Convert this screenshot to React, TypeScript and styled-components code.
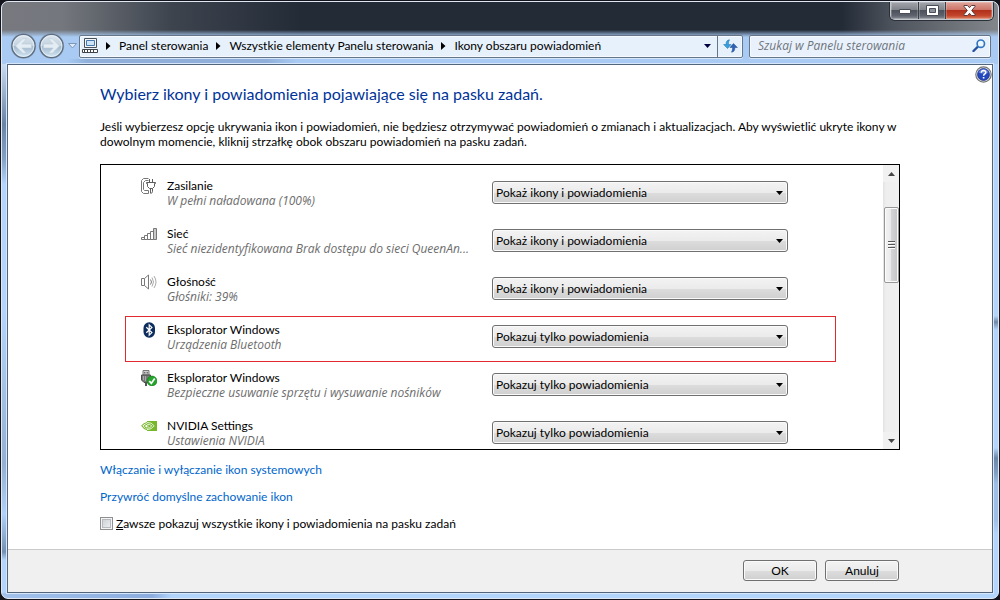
import React, { useState } from "react";
import styled, { createGlobalStyle } from "styled-components";

const uiFont = `Lato, "Open Sans", sans-serif`;
const italicFont = `"Open Sans", "Noto Sans", sans-serif`;

const GlobalStyle = createGlobalStyle`
  *, *::before, *::after { box-sizing: border-box; }
  body {
    margin: 0;
    background: #14151c;
    color: #000;
    font: 12px/15px ${uiFont};
  }
  button, input, select { font: inherit; color: inherit; margin: 0; }
  svg { display: block; flex: none; }
`;

const Desktop = styled.div`
  display: flex;
  min-height: 100vh;
  padding: 1px;
`;

const Window = styled.div`
  flex: 1;
  min-width: 0;
  display: flex;
  flex-direction: column;
  padding: 0 5px 5px;
  border: 1px solid #dfe8f2;
  border-radius: 7px;
  overflow: hidden;
  background:
    linear-gradient(#0000 28px, #a9cbf3 35px) 0 0 / 100% 62px no-repeat,
    linear-gradient(90deg, #77797f 0, #74777d 60px, #3d444e 170px, #232b37 300px, #232b37 840px, #4d535c 890px, #83878c 100%) 0 0 / 100% 62px no-repeat,
    linear-gradient(#0000 252px, #7088a6 258px, #0000 266px, #0000 384px, #6b86a8 394px, #7f9dc3 408px, #9ebfe5 420px, #9ebfe5 455px, #0000 470px) 100% 62px / 5px 100% no-repeat,
    linear-gradient(#c9dcf2 0, #6a84a5 60px, #84a2c6 95px, #0000 120px, #0000 250px, #94b0d2 400px, #b0d2f8 450px, #7390b3 488px, #0000 496px) 0 62px / 5px 100% no-repeat,
    linear-gradient(90deg, #a2c2ec 0, #8cacdf 150px, #b3d5fb 170px) 0 100% / 100% 5px no-repeat,
    #b3d5fb;
`;

const CaptionBar = styled.div`
  display: flex;
  justify-content: flex-end;
  align-items: flex-start;
  height: 32px;
`;

const CaptionGroup = styled.div`
  display: flex;
  border: 1px solid #c4c8cd;
  border-top: 0;
  border-radius: 0 0 5px 5px;
  overflow: hidden;
  box-shadow: 0 0 0 1px #2b2f38;
`;

const CaptionButton = styled.button<{ $close?: boolean }>`
  display: grid;
  place-items: center;
  width: ${(p) => (p.$close ? 47 : 27)}px;
  height: 17px;
  padding: 0;
  border: 0;
  background: ${(p) =>
    p.$close
      ? "linear-gradient(#e0a69c 0, #cd7467 45%, #b0301b 50%, #c3452b 80%, #dc8466 100%)"
      : "linear-gradient(#a3a6ab 0, #80848b 45%, #4c515b 50%, #5d626c 80%, #888d96 100%)"};
  box-shadow: inset 0 0 0 1px rgba(255, 255, 255, 0.22);
  & + & { border-left: 1px solid #3a3e47; }
`;

const NavBar = styled.div`
  display: flex;
  align-items: center;
  height: 30px;
  padding: 0 2px 6px 3px;
  background: linear-gradient(90deg, #0000 60px, rgba(105, 135, 180, 0.4) 80px, rgba(105, 135, 180, 0.4) 260px, #0000 290px) 0 25px / 100% 4px no-repeat;
`;

const TravelButtons = styled.div`
  display: flex;
  align-items: center;
  gap: 1px;
  width: 69px;
`;

const TravelButton = styled.button`
  padding: 0;
  border: 0;
  background: none;
`;

const AddressBar = styled.div`
  flex: 1;
  display: flex;
  min-width: 0;
  height: 23px;
  border: 1px solid #66768a;
  border-radius: 2px;
  background: #e7f1fb;
  box-shadow: inset 0 0 0 1px #f6faff, 0 1px 0 #d5e6fa;
`;

const Crumbs = styled.nav`
  flex: 1;
  display: flex;
  align-items: center;
  gap: 8px;
  min-width: 0;
  padding: 0 6px 1px 2px;
  white-space: nowrap;
`;

const Crumb = styled.a`
  color: #000;
  text-decoration: none;
`;

const AddressTool = styled.button<{ $divided?: boolean }>`
  display: grid;
  place-items: center;
  width: ${(p) => (p.$divided ? 25 : 20)}px;
  padding: 0;
  border: 0;
  border-left: ${(p) => (p.$divided ? "1px solid #66768a" : "0")};
  background: none;
`;

const SearchBox = styled.label`
  display: flex;
  align-items: center;
  width: 242px;
  height: 23px;
  margin-left: 6px;
  padding: 0 4px 1px 8px;
  border: 1px solid #66768a;
  border-radius: 2px;
  background: #e9f2fc;
  box-shadow: inset 0 0 0 1px #f6faff, 0 1px 0 #d5e6fa;
`;

const SearchInput = styled.input`
  flex: 1;
  min-width: 0;
  padding: 0;
  border: 0;
  outline: 0;
  background: none;
  font-family: ${italicFont};
  font-style: italic;
  &::placeholder { color: #6f757d; opacity: 1; }
`;

const Client = styled.main`
  position: relative;
  flex: 1;
  display: flex;
  flex-direction: column;
  border: 1px solid #53657b;
  background: #fff;
  box-shadow: 0 0 0 1px #d6e7fb;
`;

const HelpButton = styled.button`
  position: absolute;
  top: 1px;
  right: 0;
  padding: 0;
  border: 0;
  background: none;
`;

const Content = styled.div`
  flex: 1;
  display: flex;
  flex-direction: column;
  align-items: flex-start;
  gap: 12px;
  padding: 19px 92px 16px;
`;

const Title = styled.h1`
  margin: 0;
  color: #003399;
  font-size: 16px;
  line-height: 20px;
  font-weight: 400;
`;

const Intro = styled.p`
  margin: 3px 0;
`;

const IconList = styled.section`
  display: flex;
  width: 100%;
  height: 286px;
  border: 1px solid #000;
  overflow: hidden;
`;

const Rows = styled.div`
  flex: 1;
  min-width: 0;
  padding-top: 4px;
`;

const Row = styled.div<{ $marked?: boolean }>`
  position: relative;
  display: grid;
  grid-template-columns: 16px minmax(0, 1fr) 296px;
  column-gap: 10px;
  align-items: center;
  height: 48px;
  padding: 0 95px 0 40px;
  ${(p) =>
    p.$marked &&
    `&::after {
      content: "";
      position: absolute;
      inset: 3px 47px -1px 24px;
      border: 1px solid #e02a30;
      pointer-events: none;
    }`}
`;

const RowIcon = styled.span`
  align-self: start;
  padding-top: 9px;
`;

const RowText = styled.label`
  display: flex;
  flex-direction: column;
  white-space: nowrap;
`;

const RowNote = styled.span`
  color: #6d6d6d;
  font-family: ${italicFont};
  font-style: italic;
`;

const SelectWrap = styled.span`
  position: relative;
  display: block;
  align-self: start;
  margin-top: 12px;
  svg {
    position: absolute;
    right: 5px;
    top: 10px;
    pointer-events: none;
  }
`;

const raised = `
  border: 1px solid #707070;
  border-radius: 3px;
  background: linear-gradient(#f3f3f3 0, #ebebeb 50%, #dddddd 51%, #cfcfcf 100%);
  box-shadow: inset 0 0 0 1px #fafafa;
`;

const Select = styled.select`
  appearance: none;
  display: block;
  width: 100%;
  height: 23px;
  padding: 0 20px 0 3px;
  ${raised}
`;

const ScrollBar = styled.div`
  display: flex;
  flex-direction: column;
  align-items: center;
  width: 16px;
  background: linear-gradient(90deg, #e3e3e3 0, #eeeeee 3px, #f0f0f0 100%);
`;

const ScrollArrow = styled.button`
  display: grid;
  place-items: center;
  width: 16px;
  height: 17px;
  padding: 0;
  border: 0;
  background: #f1f1f1;
`;

const ScrollTrack = styled.div`
  flex: 1;
  padding-top: 25px;
`;

const ScrollThumb = styled.div`
  display: grid;
  place-items: center;
  width: 15px;
  height: 76px;
  border: 1px solid #979797;
  border-radius: 2px;
  background: linear-gradient(90deg, #f4f4f4 0, #e9e9eb 45%, #d4d4d7 50%, #c4c4c7 100%);
  box-shadow: inset 0 0 0 1px #fbfbfb;
`;

const Link = styled.a`
  color: #0066cc;
  text-decoration: none;
`;

const CheckLabel = styled.label`
  display: flex;
  align-items: center;
  gap: 3px;
`;

const CheckBox = styled.input`
  appearance: none;
  width: 13px;
  height: 13px;
  border: 1px solid #8e8f8f;
  background: linear-gradient(135deg, #c6cad0, #f4f4f4);
  box-shadow: inset 0 0 0 1px #f4f4f4, inset 0 0 0 2px #b6babf;
  &:checked { background: #21508f; }
`;

const Footer = styled.footer`
  display: flex;
  justify-content: flex-end;
  gap: 8px;
  padding: 10px 93px 11px;
  border-top: 1px solid #cacaca;
  background: #f0f0f0;
`;

const PushButton = styled.button`
  width: 74px;
  height: 21px;
  padding: 0;
  ${raised}
`;

const Circle = ({ flip, label }: { flip?: boolean; label: string }) => (
  <TravelButton aria-label={label}>
    <svg width="27" height="26" viewBox="0 0 27 26">
      <defs>
        <linearGradient id={flip ? "fwd" : "back"} x1="0" y1="0" x2="0" y2="1">
          <stop offset="0" stopColor="#dbe5ee" />
          <stop offset=".48" stopColor="#c4d3e0" />
          <stop offset=".52" stopColor="#a3b9cc" />
          <stop offset="1" stopColor="#d3e7f6" />
        </linearGradient>
      </defs>
      <circle cx="13.5" cy="13" r="12.7" fill="#8296ad" opacity=".6" />
      <circle cx="13.5" cy="13" r="11.6" fill={`url(#${flip ? "fwd" : "back"})`} stroke="#5d6c7e" strokeWidth="1.3" />
      <circle cx="13.5" cy="13" r="10.4" fill="none" stroke="#f0f6fb" strokeWidth=".9" opacity=".8" />
      <path
        transform={flip ? "translate(27 0) scale(-1 1)" : undefined}
        d="M5.500 13l7.300-7.300h3.800l-4.800 5.300H21.500v4h-9.700l4.800 5.300h-3.800z"
        fill="#e4edf4" stroke="#bccbd9" strokeWidth=".6"
      />
    </svg>
  </TravelButton>
);

const CrumbArrow = () => (
  <svg width="5" height="8" viewBox="0 0 5 8"><path d="M0 0l4.5 4L0 8z" fill="#000" /></svg>
);

const DownArrow = ({ color = "#000" }: { color?: string }) => (
  <svg width="7" height="4" viewBox="0 0 7 4"><path d="M0 0h7L3.5 4z" fill={color} /></svg>
);

const PowerIcon = () => (
  <svg width="16" height="16" viewBox="0 0 16 16" fill="none" stroke="#5d5d5d">
    <path d="M7.500 .5h-5l-2 2v11l2 2h5M7.500 2.500H4.500l-2 2v7l1 1h4M7.500 12.500v3" stroke="#777" />
    <path d="M5.500 4.500h9v1h-1v3l-2 2h-3l-2-2v-3h-1z" fill="#fff" />
    <path d="M8.500 4.500V1M11.500 4.500V1M9.500 10.500v5M10.500 15.500l1-2v-3" />
  </svg>
);

const NetworkIcon = () => (
  <svg width="16" height="16" viewBox="0 0 16 16" stroke="#777" fill="#fff">
    <path d="M.5 11.5h3v2h-3zM3.5 9.5h3v4h-3zM6.5 7.5h3v6h-3zM9.5 5.5h3v8h-3z" />
    <path d="M12.5 2.5h3v11h-3z" fill="#c9c9c9" />
  </svg>
);

const VolumeIcon = () => (
  <svg width="16" height="16" viewBox="0 0 16 16" fill="none" stroke="#7a7a7a">
    <path d="M.5 4.500h3l4-3.500v14l-4-3.500h-3zM3.500 4.500v7" />
    <path d="M9.500 5.500q2 2.500 0 5" />
    <path d="M11 3.500q3 4.500 0 9M13 2q4 6 0 12" stroke="#aaa" />
  </svg>
);

const BluetoothIcon = () => (
  <svg width="16" height="16" viewBox="0 0 16 16">
    <rect x="2.500" y=".3" width="11.500" height="15.400" rx="5.600" fill="#0c2d5e" />
    <path d="M5.300 5.200l5.600 5.400-2.700 2.500V2.900l2.700 2.500-5.600 5.400" fill="none" stroke="#fff" strokeWidth="1.200" />
  </svg>
);

const UsbIcon = () => (
  <svg width="16" height="16" viewBox="0 0 16 16">
    <path d="M2 .5h6V5H2z" fill="#d0d0d0" stroke="#777" />
    <path d="M3.300 2h1v1.500h-1zM5.700 2h1v1.500h-1z" fill="#444" />
    <path d="M.5 5h9v5L7 12.500H3L.5 10z" fill="#777" stroke="#4e4e4e" />
    <path d="M2.500 6v4M4.500 6v5" stroke="#a8a8a8" />
    <path d="M5 12.500V16" stroke="#555" strokeWidth="2" />
    <circle cx="11" cy="11" r="4.900" fill="#24a52c" stroke="#148019" strokeWidth=".7" />
    <path d="M8.300 11l2 2.400 3.400-5" fill="none" stroke="#fff" strokeWidth="1.700" />
  </svg>
);

const NvidiaIcon = () => (
  <svg width="16" height="16" viewBox="0 0 16 16" fill="none">
    <path d="M6 3h10v10H6z" fill="#76b82a" />
    <path d="M6 4.500Q2.800 5 .8 7.800q2 3.200 5.200 3.900M6 6.300Q4.200 6.700 3.300 8q.9 1.700 2.700 2.300" stroke="#76b82a" strokeWidth="1.100" />
    <path d="M6 4.500q4.500-.4 7.200 3.300Q10.500 11.600 6 11.700M6 6.300q3-.4 4.800 1.600Q9 10.300 6 10.300" stroke="#fff" strokeWidth=".8" />
    <path d="M5.500 8q1.200-.8 2.500 0-1.200 1-2.500 0z" fill="#fff" />
  </svg>
);

const SHOW = "Pokaż ikony i powiadomienia";
const NOTIFY = "Pokazuj tylko powiadomienia";
const HIDE = "Ukryj ikonę i powiadomienia";

type Item = { id: string; name: string; note: string; value: string; icon: React.ReactNode; marked?: boolean };

const items: Item[] = [
  { id: "power", name: "Zasilanie", note: "W pełni naładowana (100%)", value: SHOW, icon: <PowerIcon /> },
  { id: "net", name: "Sieć", note: "Sieć niezidentyfikowana Brak dostępu do sieci QueenAn...", value: SHOW, icon: <NetworkIcon /> },
  { id: "vol", name: "Głośność", note: "Głośniki: 39%", value: SHOW, icon: <VolumeIcon /> },
  { id: "bt", name: "Eksplorator Windows", note: "Urządzenia Bluetooth", value: NOTIFY, icon: <BluetoothIcon />, marked: true },
  { id: "usb", name: "Eksplorator Windows", note: "Bezpieczne usuwanie sprzętu i wysuwanie nośników", value: NOTIFY, icon: <UsbIcon /> },
  { id: "nv", name: "NVIDIA Settings", note: "Ustawienia NVIDIA", value: NOTIFY, icon: <NvidiaIcon /> },
];

const IconRow = ({ item }: { item: Item }) => {
  const [value, setValue] = useState(item.value);
  return (
    <Row $marked={item.marked}>
      <RowIcon>{item.icon}</RowIcon>
      <RowText htmlFor={item.id}>
        <span>{item.name}</span>
        <RowNote>{item.note}</RowNote>
      </RowText>
      <SelectWrap>
        <Select id={item.id} value={value} onChange={(e) => setValue(e.target.value)}>
          <option>{SHOW}</option>
          <option>{HIDE}</option>
          <option>{NOTIFY}</option>
        </Select>
        <DownArrow />
      </SelectWrap>
    </Row>
  );
};

export default function App() {
  return (
    <Desktop>
      <GlobalStyle />
      <Window>
        <CaptionBar>
          <CaptionGroup>
            <CaptionButton aria-label="Minimalizuj">
              <svg width="12" height="6" viewBox="0 0 12 6"><path d="M.5 1.500h11v4H.5z" fill="#fff" stroke="#4a4e58" /></svg>
            </CaptionButton>
            <CaptionButton aria-label="Maksymalizuj">
              <svg width="13" height="11" viewBox="0 0 13 11">
                <path d="M.5.5h12v10H.5z" fill="#fff" stroke="#4a4e58" />
                <path d="M3.500 3.500h6v4h-6z" fill="#8d929a" stroke="#4a4e58" />
              </svg>
            </CaptionButton>
            <CaptionButton $close aria-label="Zamknij">
              <svg width="13" height="11" viewBox="0 0 13 11">
                <path d="M1 .5h3.500l2 2.200 2-2.200H12v1L8.700 5.500 12 9.500v1H8.500l-2-2.200-2 2.200H1v-1l3.300-4L1 1.500z" fill="#fff" stroke="#5d3a3c" />
              </svg>
            </CaptionButton>
          </CaptionGroup>
        </CaptionBar>

        <NavBar>
          <TravelButtons>
            <Circle label="Wstecz" />
            <Circle flip label="Dalej" />
            <TravelButton aria-label="Ostatnie strony">
              <svg width="13" height="8" viewBox="0 0 13 8"><path d="M2.500 1.500h8l-4 4.500z" fill="#dbe9f8" stroke="#8098b8" /></svg>
            </TravelButton>
          </TravelButtons>
          <AddressBar>
            <Crumbs aria-label="Adres">
              <svg width="16" height="15" viewBox="0 0 16 15">
                <path d="M2.500.5h12v9h-12z" fill="#f4f7fa" stroke="#4a5058" />
                <path d="M4.500 2.500h8v5h-8z" fill="#cfe3f7" stroke="#4679b0" />
                <path d="M.5 11.500h15v3H.5z" fill="#fff" stroke="#3f4247" />
                <path d="M2 13h12" stroke="#3f4247" strokeWidth="2" strokeDasharray="1 2" />
              </svg>
              <CrumbArrow />
              <Crumb href="#panel">Panel sterowania</Crumb>
              <CrumbArrow />
              <Crumb href="#elementy">Wszystkie elementy Panelu sterowania</Crumb>
              <CrumbArrow />
              <Crumb href="#ikony">Ikony obszaru powiadomień</Crumb>
            </Crumbs>
            <AddressTool aria-label="Poprzednie lokalizacje"><DownArrow color="#000040" /></AddressTool>
            <AddressTool $divided aria-label="Odśwież">
              <svg width="15" height="14" viewBox="0 0 15 14">
                <path d="M6.500.8Q3 1 3 5.500H.6L4.500 9.500l3.600-4H5.400Q5.300 2.600 6.500.8z" fill="#35a0dc" stroke="#1d6fae" strokeWidth=".5" />
                <path d="M8.500 13.200q3.400-.2 3.400-4.700h2.500l-3.900-4-3.600 4h2.700q.1 2.900-1.100 4.700z" fill="#2f62b5" stroke="#1f4a94" strokeWidth=".5" />
              </svg>
            </AddressTool>
          </AddressBar>
          <SearchBox>
            <SearchInput type="search" aria-label="Szukaj" placeholder="Szukaj w Panelu sterowania" />
            <svg width="14" height="13" viewBox="0 0 14 13" fill="none">
              <path d="M6 7.500L1.500 12" stroke="#2650a0" strokeWidth="2.400" strokeLinecap="round" />
              <circle cx="8.800" cy="4.700" r="3.700" stroke="#3377c0" strokeWidth="1.700" fill="#eef6ff" />
            </svg>
          </SearchBox>
        </NavBar>

        <Client>
          <HelpButton aria-label="Pomoc">
            <svg width="17" height="17" viewBox="0 0 17 17">
              <circle cx="8.500" cy="8.500" r="7.700" fill="#e8e8e8" stroke="#777" strokeWidth="1.200" />
              <circle cx="8.500" cy="8.500" r="6" fill="#2348bd" stroke="#1a2f86" strokeWidth=".7" />
              <path d="M3.500 6.800a5.200 5.200 0 0 1 10 0q-5 2-10 0z" fill="#7f9ae6" opacity=".6" />
              <path d="M6.300 6.700q.1-2.200 2.300-2.200 2.200.1 2.200 2 0 1-1.200 1.700-1 .6-1 1.500" fill="none" stroke="#fff" strokeWidth="1.500" />
              <path d="M7.800 11h1.600v1.600H7.800z" fill="#fff" />
            </svg>
          </HelpButton>
          <Content>
            <Title>Wybierz ikony i powiadomienia pojawiające się na pasku zadań.</Title>
            <Intro>
              Jeśli wybierzesz opcję ukrywania ikon i powiadomień, nie będziesz otrzymywać powiadomień o zmianach i
              aktualizacjach. Aby wyświetlić ukryte ikony w dowolnym momencie, kliknij strzałkę obok obszaru
              powiadomień na pasku zadań.
            </Intro>
            <IconList aria-label="Ikony obszaru powiadomień">
              <Rows>{items.map((item) => <IconRow key={item.id} item={item} />)}</Rows>
              <ScrollBar>
                <ScrollArrow aria-label="W górę">
                  <svg width="7" height="4" viewBox="0 0 7 4"><path d="M0 4h7L3.500 0z" fill="#444" /></svg>
                </ScrollArrow>
                <ScrollTrack>
                  <ScrollThumb>
                    <svg width="7" height="8" viewBox="0 0 7 8">
                      <path d="M0 .5h7M0 3.500h7M0 6.500h7" stroke="#555" />
                      <path d="M0 1.500h7M0 4.500h7M0 7.500h7" stroke="#fff" />
                    </svg>
                  </ScrollThumb>
                </ScrollTrack>
                <ScrollArrow aria-label="W dół"><DownArrow color="#444" /></ScrollArrow>
              </ScrollBar>
            </IconList>
            <Link href="#systemowe">Włączanie i wyłączanie ikon systemowych</Link>
            <Link href="#domyslne">Przywróć domyślne zachowanie ikon</Link>
            <CheckLabel>
              <CheckBox type="checkbox" />
              <span><u>Z</u>awsze pokazuj wszystkie ikony i powiadomienia na pasku zadań</span>
            </CheckLabel>
          </Content>
          <Footer>
            <PushButton>OK</PushButton>
            <PushButton>Anuluj</PushButton>
          </Footer>
        </Client>
      </Window>
    </Desktop>
  );
}
